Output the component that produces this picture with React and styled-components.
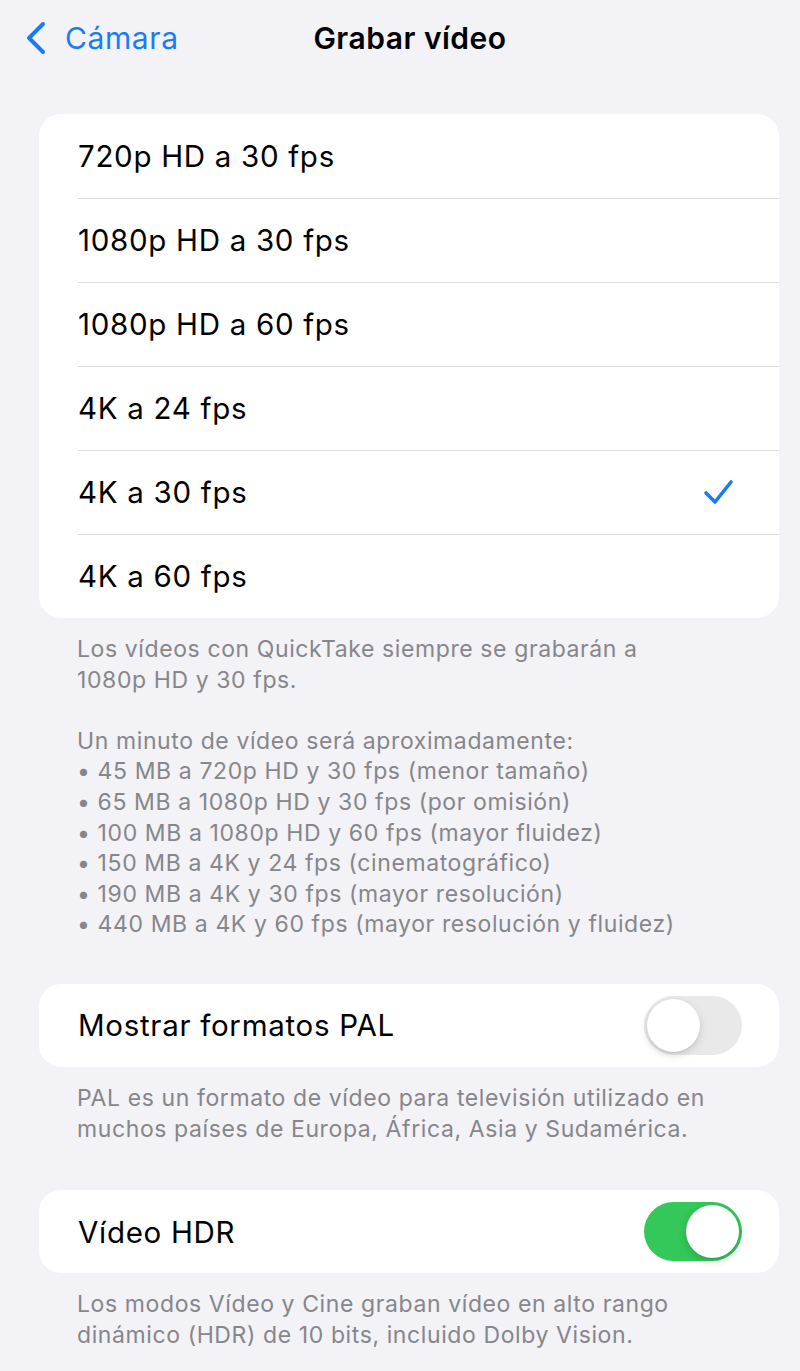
import React from "react";
import styled, { createGlobalStyle } from "styled-components";

const GlobalStyle = createGlobalStyle`
  html, body {
    margin: 0;
    padding: 0;
    background: #f2f2f7;
  }
  body {
    font-family: Inter, "Noto Sans", sans-serif;
    -webkit-font-smoothing: antialiased;
  }
`;

const Page = styled.div`
  width: 800px;
  min-height: 1371px;
  background: #f2f2f7;
  box-sizing: border-box;
  padding: 0 21px 0 39px;
`;

const NavBar = styled.div`
  position: relative;
  height: 76px;
  margin-left: -39px;
  margin-right: -21px;
  display: flex;
  align-items: center;
`;

const BackButton = styled.div`
  display: flex;
  align-items: center;
  gap: 18px;
  padding-left: 25px;
  color: #1a7cf5;
  font-size: 30px;
  letter-spacing: 0.6px;
`;

const Title = styled.div`
  position: absolute;
  left: 0;
  right: 0;
  text-align: center;
  padding-left: 20px;
  font-size: 30px;
  font-weight: 600;
  color: #000;
  letter-spacing: 0.5px;
  pointer-events: none;
`;

const Card = styled.div`
  background: #fff;
  border-radius: 22px;
  overflow: hidden;
  margin-top: ${(p) => p.$top || 0}px;
`;

const Row = styled.div`
  height: ${(p) => p.$h || 84}px;
  display: flex;
  align-items: center;
  justify-content: space-between;
  padding-left: 39px;
  padding-right: 38px;
  position: relative;
  font-size: 29.5px;
  color: #000;
  letter-spacing: 0.7px;

  & + &::before {
    content: "";
    position: absolute;
    top: 0;
    left: 39px;
    right: 0;
    height: 1px;
    background: #dcdce0;
  }
`;

const Footer = styled.div`
  padding: 16px 70px 0 38px;
  font-size: 23px;
  line-height: 30.6px;
  color: #86868b;
  letter-spacing: 0.6px;
`;

const Gap = styled.div`
  height: 30.6px;
`;

const Track = styled.div`
  width: 98px;
  height: 59px;
  border-radius: 30px;
  background: ${(p) => (p.$on ? "#34c759" : "#e9e9ea")};
  position: relative;
  margin-right: -1px;
`;

const Knob = styled.div`
  position: absolute;
  top: 3px;
  left: ${(p) => (p.$on ? "42px" : "3px")};
  width: 53px;
  height: 53px;
  border-radius: 50%;
  background: #fff;
  box-shadow: 0 3px 8px rgba(0, 0, 0, 0.15), 0 1px 1px rgba(0, 0, 0, 0.08);
`;

const Toggle = ({ on }) => (
  <Track $on={on}>
    <Knob $on={on} />
  </Track>
);

const Chevron = () => (
  <svg width="22" height="34" viewBox="0 0 22 34">
    <path d="M18 3 L4 17 L18 31" fill="none" stroke="#1a7cf5" strokeWidth="4" strokeLinecap="round" strokeLinejoin="round" />
  </svg>
);

const Check = () => (
  <svg width="32" height="30" viewBox="0 0 32 30" style={{ marginRight: 6 }}>
    <path d="M3 16 L12 25 L28 5" fill="none" stroke="#1a7cf5" strokeWidth="3.6" strokeLinecap="round" strokeLinejoin="round" />
  </svg>
);

const formats = [
  "720p HD a 30 fps",
  "1080p HD a 30 fps",
  "1080p HD a 60 fps",
  "4K a 24 fps",
  "4K a 30 fps",
  "4K a 60 fps",
];

const sizes = [
  "45 MB a 720p HD y 30 fps (menor tamaño)",
  "65 MB a 1080p HD y 30 fps (por omisión)",
  "100 MB a 1080p HD y 60 fps (mayor fluidez)",
  "150 MB a 4K y 24 fps (cinematográfico)",
  "190 MB a 4K y 30 fps (mayor resolución)",
  "440 MB a 4K y 60 fps (mayor resolución y fluidez)",
];

export default function App() {
  return (
    <>
      <GlobalStyle />
      <Page>
        <NavBar>
          <BackButton>
            <Chevron />
            <span>Cámara</span>
          </BackButton>
          <Title>Grabar vídeo</Title>
        </NavBar>

        <Card $top={38}>
          {formats.map((f) => (
            <Row key={f}>
              <span>{f}</span>
              {f === "4K a 30 fps" && <Check />}
            </Row>
          ))}
        </Card>
        <Footer>
          <div>Los vídeos con QuickTake siempre se grabarán a 1080p HD y 30 fps.</div>
          <Gap />
          <div>Un minuto de vídeo será aproximadamente:</div>
          {sizes.map((s) => (
            <div key={s}>• {s}</div>
          ))}
        </Footer>

        <Card $top={44}>
          <Row $h={83}>
            <span>Mostrar formatos PAL</span>
            <Toggle on={false} />
          </Row>
        </Card>
        <Footer>
          PAL es un formato de vídeo para televisión utilizado en muchos países de Europa, África, Asia y Sudamérica.
        </Footer>

        <Card $top={46}>
          <Row $h={83}>
            <span>Vídeo HDR</span>
            <Toggle on />
          </Row>
        </Card>
        <Footer>
          Los modos Vídeo y Cine graban vídeo en alto rango dinámico (HDR) de 10 bits, incluido Dolby Vision.
        </Footer>
      </Page>
    </>
  );
}
